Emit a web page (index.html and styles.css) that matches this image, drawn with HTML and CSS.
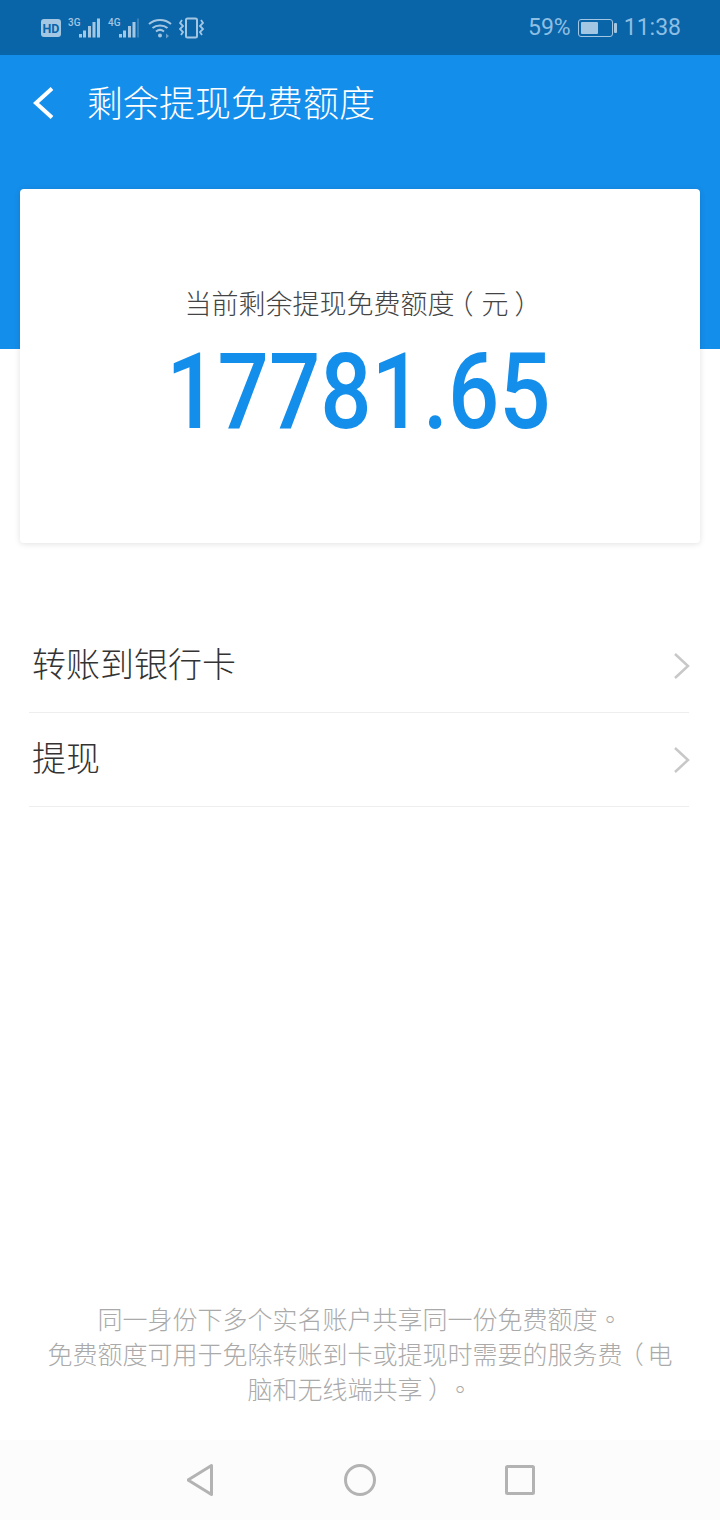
FILE: index.html
```html
<!DOCTYPE html>
<html lang="zh-CN">
<head>
<meta charset="utf-8">
<title>剩余提现免费额度</title>
<link rel="stylesheet" href="styles.css">
</head>
<body>
<div class="page">
  <div class="status">
    <div class="status-left">
      <svg width="20" height="18" viewBox="0 0 20 18"><rect width="20" height="18" rx="3" fill="#a3c7e2"/><text x="10" y="13.500" text-anchor="middle" class="hd-text">HD</text></svg>
      <svg width="33" height="22" viewBox="0 0 33 22"><text x="0" y="8.500" class="sig-label">3G</text><g fill="#a3c7e2"><rect x="11" y="17" width="3" height="3.500"/><rect x="15" y="13.500" width="3" height="7"/><rect x="20" y="9" width="3" height="11.500"/><rect x="24.500" y="5" width="3" height="15.500"/><rect x="29" y="1.500" width="3" height="19"/></g></svg>
      <svg width="33" height="22" viewBox="0 0 33 22"><text x="0" y="8.500" class="sig-label">4G</text><g fill="#a3c7e2"><rect x="11" y="17" width="3" height="3.500"/><rect x="15" y="13.500" width="3" height="7"/><rect x="20" y="9" width="3" height="11.500"/><rect x="24.500" y="5" width="3" height="15.500"/><rect x="29" y="1.500" width="2" height="19" opacity=".3"/></g></svg>
      <svg width="24" height="22" viewBox="0 0 24 22" fill="none" stroke="#a3c7e2" stroke-width="2"><path d="M1 7C7 1.500 17 1.500 23 7"/><path d="M4.500 11C8.500 7.500 15.500 7.500 19.500 11"/><path d="M8 14.500C10.500 12.500 13.500 12.500 16 14.500"/><circle cx="12" cy="18.500" r="2" fill="#a3c7e2" stroke="none"/><path d="M18 16.500l3 2.500-3 2.500z" fill="#a3c7e2" stroke="none" opacity=".6"/></svg>
      <svg width="26" height="22" viewBox="0 0 26 22" fill="none" stroke="#a3c7e2" stroke-width="2"><rect x="7" y="1.500" width="11" height="19" rx="1.500"/><path d="M3 3L1 6l3 3-3 3 3 3-2 3" stroke-width="1.800"/><path d="M22 3l2 3-3 3 3 3-3 3 2 3" stroke-width="1.800"/></svg>
    </div>
    <div class="status-right">
      <span>59%</span>
      <span class="battery"><span class="battery-body"><span class="battery-fill"></span></span><span class="battery-tip"></span></span>
      <span>11:38</span>
    </div>
  </div>
  <header class="hero">
    <div class="titlebar">
      <svg class="back" width="24" height="36" viewBox="0 0 24 36" fill="none" stroke="#fff" stroke-width="4"><path d="M22 3.500L6 18l16 14.500"/></svg>
      <h1 class="title">剩余提现免费额度</h1>
    </div>
  </header>
  <section class="card">
    <p class="card-label">当前剩余提现免费额度<span class="paren-open">（</span>元<span class="paren-close">）</span></p>
    <p class="amount">17781.65</p>
  </section>
  <ul class="list">
    <li class="row"><span class="row-text">转账到银行卡</span><svg class="chev" width="18" height="28" viewBox="0 0 18 28" fill="none" stroke="#c8c8c8" stroke-width="2.500"><path d="M2 2l13 12L2 26"/></svg></li>
    <li class="row"><span class="row-text">提现</span><svg class="chev" width="18" height="28" viewBox="0 0 18 28" fill="none" stroke="#c8c8c8" stroke-width="2.500"><path d="M2 2l13 12L2 26"/></svg></li>
  </ul>
  <footer class="note">同一身份下多个实名账户共享同一份免费额度<span class="punct" lang="zh-TW">。</span><br>免费额度可用于免除转账到卡或提现时需要的服务费<span class="paren-open">（</span>电<br>脑和无线端共享<span class="paren-close">）</span><span class="punct" lang="zh-TW">。</span></footer>
  <nav class="navbar">
    <svg width="28" height="34" viewBox="0 0 28 34" fill="none" stroke="#b3b3b3" stroke-width="3" stroke-linejoin="round"><path d="M1 17L24.500 2.500v29z"/></svg>
    <svg width="32" height="32" viewBox="0 0 32 32" fill="none" stroke="#b3b3b3" stroke-width="3"><circle cx="16" cy="16" r="14.500"/></svg>
    <svg width="30" height="30" viewBox="0 0 30 30" fill="none" stroke="#b3b3b3" stroke-width="3" stroke-linejoin="round"><rect x="1.500" y="1.500" width="27" height="27" rx="1"/></svg>
  </nav>
</div>
</body>
</html>
```
FILE: styles.css
```css
* { box-sizing: border-box; }
html, body { margin: 0; padding: 0; }
body { font-family: "Noto Sans CJK SC", "Noto Sans", sans-serif; font-weight: 300; background: #fff; text-spacing-trim: space-all; }
.page { width: 720px; height: 1520px; display: flex; flex-direction: column; background: #fff; overflow: hidden; }
.status { height: 55px; flex: none; background: #0a64a8; display: flex; justify-content: space-between; align-items: center; padding: 0 39px 0 41px; color: #8dbfe3; font-family: Roboto, sans-serif; font-weight: 400; font-size: 23px; }
.status-left { display: flex; align-items: center; gap: 7px; }
.status-right { display: flex; align-items: center; gap: 7px; }
.hd-text { font: 700 12.500px Roboto, sans-serif; fill: #0a64a8; }
.sig-label { font: 500 10px Roboto, sans-serif; fill: #a3c7e2; }
.battery { display: flex; align-items: center; gap: 1px; }
.battery-body { width: 35px; height: 18px; border: 1.500px solid #a3c7e2; border-radius: 3px; padding: 2px; display: block; }
.battery-fill { display: block; width: 17px; height: 100%; background: #a3c7e2; border-radius: 1px; }
.battery-tip { width: 3px; height: 10px; background: #a3c7e2; border-radius: 1px; }
.hero { height: 294px; flex: none; background: #148eeb; }
.titlebar { display: flex; align-items: center; height: 95px; padding-left: 30px; }
.back { flex: none; }
.title { margin: 0 0 4px 33px; font-size: 36px; font-weight: 300; line-height: 48px; color: #fff; }
.card { margin: -160px 20px 0; height: 354px; background: #fff; border-radius: 4px; box-shadow: 0 1px 6px rgba(0,0,0,.12); position: relative; display: flex; flex-direction: column; align-items: center; padding-top: 94px; }
.card-label { margin: 0 0 14px; font-size: 27px; line-height: 40px; color: #444; }
.punct { font-family: "Noto Sans CJK TC", sans-serif; }
.paren-open, .paren-close { display: inline-block; width: 1em; white-space: nowrap; }
.paren-open { text-indent: -.3em; }
.paren-close { text-indent: .22em; }
.amount { margin: 0 3px 0 0; font-family: Roboto, sans-serif; font-weight: 550; font-size: 105px; line-height: 112px; color: #148eeb; transform: scaleX(.86); }
.list { list-style: none; margin: 76px 31px 0 29px; padding: 0; }
.row { height: 94px; display: flex; align-items: center; justify-content: space-between; border-bottom: 1px solid #eee; font-size: 34px; color: #333; padding: 0 0 0 3px; }
.row-text { margin-bottom: 6px; }
.chev { margin-right: -2px; }
.note { margin-top: auto; padding: 0 40px; text-align: center; font-size: 25px; line-height: 35px; color: #aaa; }
.navbar { margin-top: 34px; height: 80px; flex: none; background: #fcfcfc; display: flex; align-items: center; justify-content: center; gap: 129px; padding-left: 1px; }
```
